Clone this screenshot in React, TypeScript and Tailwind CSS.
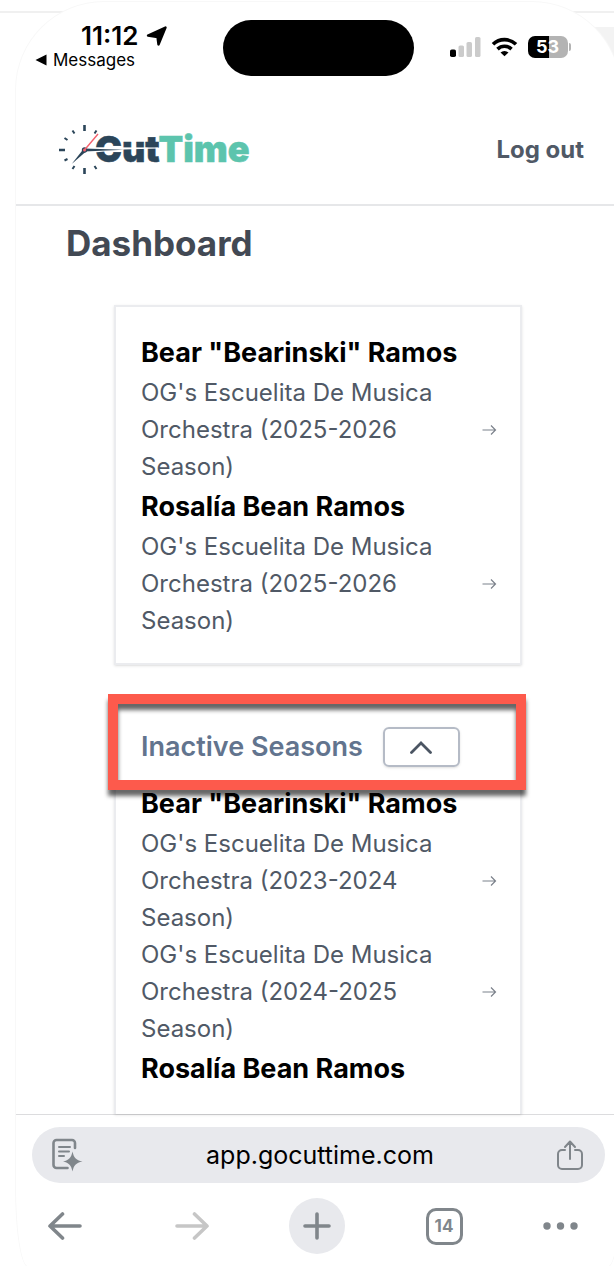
import React from 'react';

interface Season {
  label: string;
}

interface Member {
  name: string;
  seasons: Season[];
}

const activeMembers: Member[] = [
  { name: 'Bear "Bearinski" Ramos', seasons: [{ label: "OG's Escuelita De Musica Orchestra (2025-2026 Season)" }] },
  { name: 'Rosalía Bean Ramos', seasons: [{ label: "OG's Escuelita De Musica Orchestra (2025-2026 Season)" }] },
];

const inactiveMembers: Member[] = [
  {
    name: 'Bear "Bearinski" Ramos',
    seasons: [
      { label: "OG's Escuelita De Musica Orchestra (2023-2024 Season)" },
      { label: "OG's Escuelita De Musica Orchestra (2024-2025 Season)" },
    ],
  },
  { name: 'Rosalía Bean Ramos', seasons: [] },
];

const StatusBar: React.FC = () => (
  <div className="grid h-[90px] grid-cols-[1fr_191px_1fr] items-start pt-[18px]">
    <div className="pl-[19px]">
      <div className="flex h-8 items-center gap-2 pl-[46px]">
        <span className="text-[26px] leading-8 font-semibold">11:12</span>
        <svg width="22" height="22" viewBox="0 0 22 22" stroke="#000" strokeWidth="2.4" strokeLinejoin="round">
          <path d="M2 10.500 19.500 2.500 12.500 19.500 11.500 12Z" />
        </svg>
      </div>
      <button type="button" className="flex items-center gap-1.5 text-[17px] leading-4">
        <svg width="12" height="12" viewBox="0 0 12 12">
          <path d="M11.500 .5v11L.5 6Z" />
        </svg>
        Messages
      </button>
    </div>

    <div className="h-14 rounded-full bg-black" />

    <div className="flex items-center gap-2.5 pt-4 pl-9">
      <svg width="31" height="20" viewBox="0 0 31 20">
        <rect x="0" y="12.500" width="6" height="7.500" rx="1.8" />
        <g fill="#cbcbcb">
          <rect x="8.500" y="8.500" width="5.500" height="11.500" rx="1.6" />
          <rect x="16.500" y="5" width="5.500" height="15" rx="1.6" />
          <rect x="25" y="0" width="5.500" height="20" rx="1.6" />
        </g>
      </svg>
      <svg width="27" height="20" viewBox="0 0 26 20" fill="none" stroke="#000" strokeWidth="3.6">
        <path d="M1.500 7.300a16.500 16.500 0 0 1 23 0" />
        <path d="M6 12.100a10 10 0 0 1 14 0" />
        <path d="M13 19.300 9 15.600a5.800 5.800 0 0 1 8 0Z" fill="#000" stroke="none" />
      </svg>
      <div className="flex items-center gap-px">
        <div className="flex h-[22px] w-10 items-center justify-center rounded-[7px] bg-[linear-gradient(to_right,#000_52%,#b3b3b3_52%)] text-lg leading-none font-bold text-white">
          53
        </div>
        <div className="h-2 w-0.5 rounded-r-full bg-[#b3b3b3]" />
      </div>
    </div>
  </div>
);

const Logo: React.FC = () => (
  <svg width="194" height="52" viewBox="0 0 194 52" role="img" aria-label="CutTime">
    <text x="37" y="38" fontFamily="Inter, sans-serif" fontSize="36" fontWeight="900" fill="#2b4559" stroke="#2b4559" strokeWidth=".5">
      Cut<tspan fill="#5cc4ad" stroke="#5cc4ad">Time</tspan>
    </text>
    {/* the minute hand slices through the wordmark */}
    <path d="M34 23.200 100 23.500v1L66 25.600 34 28.800Z" fill="#fff" />
    <g stroke="#2b4559" strokeWidth="2.6">
      <path d="M26.500 1v6M26.500 44v6M1 26h6" />
      <g strokeWidth="2">
        <path d="M14.500 6.500l2 3M6.500 14l3 2M6.500 36.500l3-1.500M14.500 45l2-3M38.500 45l-2-3M38.500 6.500l-2 3" />
      </g>
    </g>
    <path d="M26 24.500 66 25.800l-40 1.700Z" fill="#2b4559" />
    <path d="M25.500 25 13.700 40 28 27.500Z" fill="#2b4559" />
    <circle cx="26.500" cy="26" r="2.700" fill="#2b4559" />
    <path d="M26.500 26 40 10" stroke="#f4606c" strokeWidth="1.4" />
    <circle cx="26.500" cy="26" r="1.500" fill="#f4606c" />
  </svg>
);

const SeasonLink: React.FC<{ season: Season }> = ({ season }) => (
  <a href="#season" className="flex items-center justify-between">
    <span className="w-[310px] text-2xl leading-[37px] text-[#505966]">{season.label}</span>
    <svg width="15" height="12" viewBox="0 0 15 12" fill="none" stroke="#7b818b" strokeWidth="1.2">
      <path d="M.5 6h13M9 1.500 13.500 6 9 10.500" />
    </svg>
  </a>
);

const MemberList: React.FC<{ members: Member[] }> = ({ members }) => (
  <ul>
    {members.map(member => (
      <li key={member.name}>
        <h3 className="text-[27px] leading-[43px] font-bold text-black">{member.name}</h3>
        {member.seasons.map(season => (
          <SeasonLink key={season.label} season={season} />
        ))}
      </li>
    ))}
  </ul>
);

const BrowserBar: React.FC = () => (
  <footer className="border-t border-[#dcdcde] py-3 pr-[15px] pl-4">
    <div className="flex h-14 items-center justify-between rounded-full bg-[#e8e9ed] px-5">
      <button type="button" aria-label="Page tools">
        <svg width="31" height="34" viewBox="0 0 31 34" fill="none" stroke="#80868b" strokeWidth="2.6" strokeLinecap="round">
          <path d="M23 10V5a3 3 0 0 0-3-3H4.500a3 3 0 0 0-3 3v22a3 3 0 0 0 3 3h11" />
          <path d="M7 9h11M7 13.500h10M7 18h5" strokeWidth="2" />
          <path d="M20.500 13.500c1.300 6 3.300 8.500 10 10-6.700 1.300-8.700 4-10 10-1.300-6-3.300-8.700-9.500-10 6.200-1.500 8.200-4 9.500-10Z" fill="#80868b" stroke="none" />
        </svg>
      </button>
      <span className="text-[25px] leading-8 text-black">app.gocuttime.com</span>
      <button type="button" aria-label="Share" className="pr-0.5">
        <svg width="26" height="30" viewBox="0 0 26 30" fill="none" stroke="#80868b" strokeWidth="2" strokeLinecap="round" strokeLinejoin="round">
          <path d="M8 10H5a4 4 0 0 0-4 4v11a4 4 0 0 0 4 4h16a4 4 0 0 0 4-4V14a4 4 0 0 0-4-4h-3M13 19V2M8 7l5-5.500L18 7" />
        </svg>
      </button>
    </div>

    <nav className="mt-[15px] flex h-14 items-center justify-between pr-[27px] pl-4">
      <button type="button" aria-label="Back">
        <svg width="34" height="28" viewBox="0 0 34 28" fill="none" stroke="#80868b" strokeWidth="3.6" strokeLinecap="round" strokeLinejoin="round">
          <path d="M32 14H2M14.500 2 2 14l12.500 12" />
        </svg>
      </button>
      <button type="button" aria-label="Forward" className="pl-3">
        <svg width="34" height="28" viewBox="0 0 34 28" fill="none" stroke="#c6c6c6" strokeWidth="3.6" strokeLinecap="round" strokeLinejoin="round">
          <path d="M2 14h30M19.500 2 32 14 19.500 26" />
        </svg>
      </button>
      <button type="button" aria-label="New tab" className="flex size-14 items-center justify-center rounded-full bg-[#e8e9ed]">
        <svg width="28" height="28" viewBox="0 0 28 28" stroke="#80868b" strokeWidth="3.6" strokeLinecap="round">
          <path d="M14 2v24M2 14h24" />
        </svg>
      </button>
      <button type="button" aria-label="Open tabs" className="flex size-[37px] items-center justify-center rounded-[10px] border-3 border-[#80868b] text-[17px] leading-none font-bold text-[#80868b]">
        14
      </button>
      <button type="button" aria-label="More">
        <svg width="35" height="8" viewBox="0 0 35 8" fill="#80868b">
          <circle cx="4" cy="4" r="3.7" />
          <circle cx="17.500" cy="4" r="3.7" />
          <circle cx="31" cy="4" r="3.7" />
        </svg>
      </button>
    </nav>
  </footer>
);

export default function App() {
  const [open, setOpen] = React.useState(true);

  return (
    <div className="relative min-h-screen overflow-hidden bg-white pt-0.5 font-['Inter',sans-serif]">
      {/* Page behind the phone */}
      <div className="absolute inset-x-0 top-[11px] h-0.5 bg-[#f0f0f0]" />
      <div className="absolute top-[27px] right-0 h-9 w-20 bg-[#f3f3f3]" />

      <div className="relative -mr-1.5 ml-4 flex min-h-[calc(100vh-2px)] flex-col rounded-[88px_88px_12px_12px/88px_88px_80px_80px] bg-white ring-1 ring-[#f8f8f8]">
        <StatusBar />

        <header className="flex h-[114px] items-center justify-between border-b-2 border-[#e6e7e9] pt-1 pr-9 pl-[42px]">
          <a href="#home"><Logo /></a>
          <button type="button" className="text-2xl leading-8 font-bold text-[#505966]">Log out</button>
        </header>

        <main className="flex-1 px-[50px] pt-3">
          <h1 className="text-[35px] leading-[50px] font-bold text-[#424954]">Dashboard</h1>

          <section className="mx-12 mt-[37px] border-2 border-[#ebecef] py-6 pr-[23px] pl-[25px] shadow-sm">
            <MemberList members={activeMembers} />
          </section>

          <section className="relative mx-12 mt-9 border-2 border-b-0 border-[#ebecef] py-6 pr-[23px] pl-[25px] shadow-sm">
            <div className="mb-[15px] flex items-center gap-5">
              <h2 className="text-[27px] leading-10 font-semibold text-slate-500">Inactive Seasons</h2>
              <button
                type="button"
                aria-label="Toggle inactive seasons"
                aria-expanded={open}
                onClick={() => setOpen(!open)}
                className="flex h-10 w-[77px] items-center justify-center rounded-md border-2 border-[#b5bbc6] shadow-sm"
              >
                <svg width="22" height="13" viewBox="0 0 22 13" fill="none" stroke="#4b5563" strokeWidth="2.8" strokeLinecap="round">
                  <path d="M1.500 11.500 11 2l9.500 9.500" />
                </svg>
              </button>
            </div>
            {open && <MemberList members={inactiveMembers} />}

            {/* Callout frame */}
            <div className="pointer-events-none absolute -inset-x-2 -top-[9px] -right-1.5 h-24 border-10 border-[#fd5a4c] drop-shadow-[0_6px_2px_rgba(0,0,0,0.6)]" />
          </section>
        </main>

        <BrowserBar />
      </div>
    </div>
  );
}
